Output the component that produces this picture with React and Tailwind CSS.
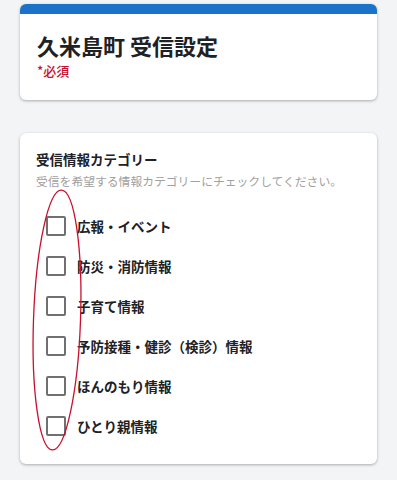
import React from "react";

const categories = [
  "広報・イベント",
  "防災・消防情報",
  "子育て情報",
  "予防接種・健診（検診）情報",
  "ほんのもり情報",
  "ひとり親情報",
];

const App = () => {
  return (
    <div
      className="relative min-h-[480px] bg-[#f3f4f6] px-5 pt-1 pb-4"
      style={{ fontFamily: '"Noto Sans CJK JP", "Noto Sans", sans-serif' }}
    >
      <div className="overflow-hidden rounded-md bg-white shadow-[0_1px_3px_rgba(0,0,0,0.3)]">
        <div className="h-[10px] bg-[#1a73c8]" />
        <div className="px-[17px] pt-[16px] pb-[20px]">
          <h1 className="text-[22px] font-bold leading-[30px] text-[#202124]">久米島町 受信設定</h1>
          <p className="mt-[2px] text-[13px] font-medium leading-[18px] text-[#c8102e]">*必須</p>
        </div>
      </div>

      <div className="mt-[33px] rounded-md bg-white px-4 pt-[17px] pb-[28px] shadow-[0_1px_3px_rgba(0,0,0,0.3)]">
        <h2 className="text-[13.5px] font-bold leading-[18px] text-[#202124]">受信情報カテゴリー</h2>
        <p className="mt-[5px] text-[11.8px] leading-[16px] text-[#a0a0a0]">
          受信を希望する情報カテゴリーにチェックしてください。
        </p>
        <ul className="mt-[27px] flex flex-col gap-5 pl-[10px]">
          {categories.map((c) => (
            <li key={c} className="flex h-5 items-center gap-[11px]">
              <span className="h-5 w-5 rounded-[2px] border-2 border-[#707070]" />
              <span className="text-[13.5px] font-bold text-[#202124]">{c}</span>
            </li>
          ))}
        </ul>
      </div>

      <svg
        className="pointer-events-none absolute left-0 top-0"
        width="397"
        height="480"
        viewBox="0 0 397 480"
      >
        <ellipse
          cx="57"
          cy="320"
          rx="23.5"
          ry="130"
          transform="rotate(2 57 320)"
          fill="none"
          stroke="#c8102e"
          strokeWidth="1.3"
        />
      </svg>
    </div>
  );
};

export default App;
